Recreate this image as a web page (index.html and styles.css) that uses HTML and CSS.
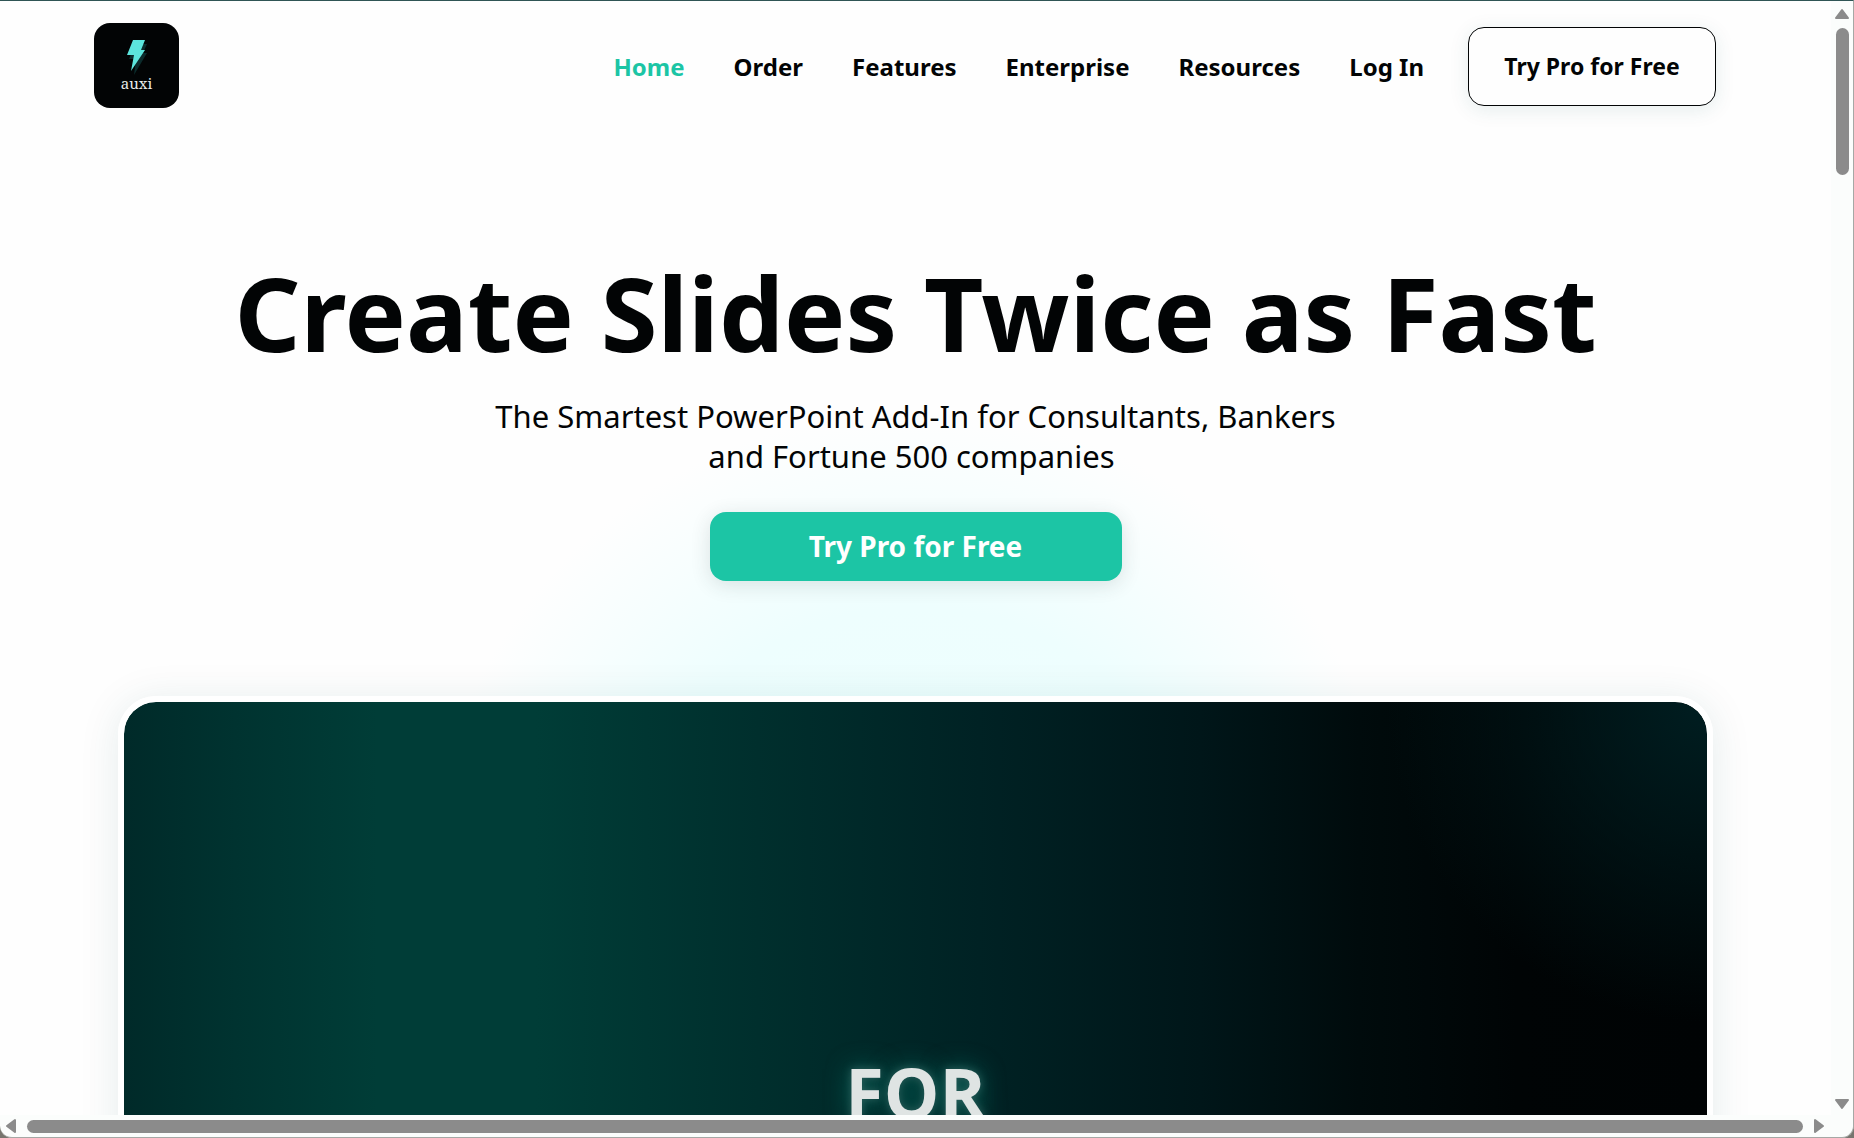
FILE: index.html
```html
<!DOCTYPE html>
<html lang="en">
<head>
    <meta charset="UTF-8">
    <meta name="viewport" content="width=device-width, initial-scale=1.0">
    <title>auxi - Create Slides Twice as Fast</title>
    <link rel="stylesheet" href="styles.css">
</head>
<body>

<div class="window">
    <div class="page">
        <header class="header">
            <a href="#home" class="logo" aria-label="auxi">
                <svg class="bolt" viewBox="0 0 24 36" aria-hidden="true">
                    <path d="M10 4h12l-4 9h4L9 35l2-16H4z" fill="#0b2b2c"/>
                    <path d="M8 0h12l-4 10h4L6 31l3-16H2z" fill="#5ce5dd"/>
                </svg>
                <span>auxi</span>
            </a>
            <nav class="nav">
                <a href="#home" class="active">Home</a>
                <a href="#order">Order</a>
                <a href="#features">Features</a>
                <a href="#enterprise">Enterprise</a>
                <a href="#resources">Resources</a>
                <a href="#login">Log In</a>
            </nav>
            <button type="button" class="header-button">Try Pro for Free</button>
        </header>

        <main class="hero">
            <h1>Create Slides Twice as Fast</h1>
            <p>The Smartest PowerPoint Add-In for Consultants, Bankers<br>and Fortune 500 companies&nbsp;</p>
            <button type="button" class="hero-button">Try Pro for Free</button>
            <div class="video">
                <span class="caption">FOR</span>
            </div>
        </main>
    </div>

    <div class="scrollbar vertical" aria-hidden="true">
        <svg class="arrow" viewBox="0 0 16 12"><path d="M8 2l6 8H2z"/></svg>
        <div class="track"><div class="thumb"></div></div>
        <svg class="arrow" viewBox="0 0 16 12"><path d="M8 10L2 2h12z"/></svg>
    </div>

    <div class="scrollbar horizontal" aria-hidden="true">
        <svg class="arrow" viewBox="0 0 12 16"><path d="M2 8l8-6v12z"/></svg>
        <div class="track"><div class="thumb"></div></div>
        <svg class="arrow" viewBox="0 0 12 16"><path d="M10 8L2 2v12z"/></svg>
    </div>
</div>

</body>
</html>
```

FILE: styles.css
```css
* {
    box-sizing: border-box;
}
body {
    margin: 0;
    background-color: #77756e;
    color: #020405;
    font-family: "Noto Sans", Tahoma, sans-serif;
}
.window {
    display: grid;
    grid-template-columns: minmax(0, 1fr) 22px;
    grid-template-rows: minmax(0, 1fr) 22px;
    height: 100vh;
    overflow: hidden;
    background-color: #fbfdfc;
    border: 1px solid #a5a8a5;
    border-top-color: #2f5555;
    border-left: none;
    border-radius: 0 0 12px 12px;
}
.page {
    overflow: hidden;
    background: radial-gradient(circle 490px at 50% 900px, #ebfffe 0%, #eefefe 60%, #f7fefe 82%, #fefefe 100%);
}
.header {
    display: flex;
    align-items: center;
    padding: 22px 115px 0 94px;
}
.logo {
    display: flex;
    flex-direction: column;
    align-items: center;
    width: 85px;
    height: 85px;
    margin-bottom: 2px;
    padding-top: 17px;
    border-radius: 16px;
    background-color: #020405;
    color: #e8ebe9;
    font-family: "Noto Serif", "DejaVu Serif", serif;
    font-size: 15px;
    line-height: 14px;
    text-decoration: none;
}
.bolt {
    width: 24px;
    height: 36px;
}
.nav {
    display: flex;
    gap: 49px;
    margin-left: auto;
    margin-right: 44px;
}
.nav a {
    color: #020405;
    font-size: 24px;
    font-weight: bold;
    line-height: 32px;
    text-decoration: none;
}
.nav a.active {
    color: #1cc5a5;
}
button {
    padding: 0 0 2px;
    border: none;
    border-radius: 16px;
    font-family: inherit;
    font-weight: bold;
    cursor: pointer;
}
.header-button {
    width: 248px;
    height: 79px;
    border: 1px solid #020405;
    background-color: #fefefe;
    color: #020405;
    font-size: 23px;
    box-shadow: 0 4px 20px rgba(20, 90, 90, 0.1);
}
.hero {
    display: flex;
    flex-direction: column;
    align-items: center;
    padding: 142px 118px 0;
}
.hero h1 {
    margin: 0;
    font-size: 103px;
    line-height: 120px;
    white-space: nowrap;
}
.hero p {
    margin: 24px 0 36px;
    font-size: 31px;
    line-height: 40px;
    text-align: center;
}
.hero-button {
    width: 412px;
    height: 69px;
    background-color: #1cc5a5;
    color: #fff;
    font-size: 28px;
    box-shadow: 0 4px 20px rgba(40, 60, 60, 0.14);
}
.video {
    align-self: stretch;
    display: flex;
    justify-content: center;
    height: 900px;
    margin-top: 115px;
    padding-top: 350px;
    border: 6px solid #fff;
    border-radius: 38px;
    background:
        radial-gradient(circle 320px at 100% 0%, #001e21 0%, rgba(0, 25, 29, 0) 100%),
        linear-gradient(90deg, #002a29 0%, #003330 7%, #003d37 16%, #003d37 26%, #002f2d 40%, #002224 54%, #001619 68%, #000b0c 78%, #000405 88%, #000304 100%);
    background-clip: padding-box;
    box-shadow: 0 4px 40px rgba(20, 80, 80, 0.1);
}
.caption {
    color: #dfe4e3;
    font-family: "Open Sans", sans-serif;
    font-size: 70px;
    font-weight: bold;
    line-height: 80px;
    text-shadow: 0 0 8px #2f5f5c, 0 0 24px #00695e;
}
.scrollbar {
    display: flex;
    align-items: center;
    gap: 8px;
}
.scrollbar .arrow {
    flex: none;
    width: 16px;
    height: 12px;
    fill: #8b8b8b;
    stroke: #8b8b8b;
    stroke-width: 2;
    stroke-linejoin: round;
}
.scrollbar .track {
    flex: 1;
}
.scrollbar .thumb {
    border-radius: 7px;
    background-color: #8b8b8b;
}
.vertical {
    flex-direction: column;
    padding: 7px 0 5px;
}
.vertical .thumb {
    width: 13px;
    height: 147px;
}
.horizontal {
    gap: 10px;
    padding: 0 6px 0 5px;
}
.horizontal .arrow {
    width: 12px;
    height: 16px;
}
.horizontal .thumb {
    height: 13px;
}
```
